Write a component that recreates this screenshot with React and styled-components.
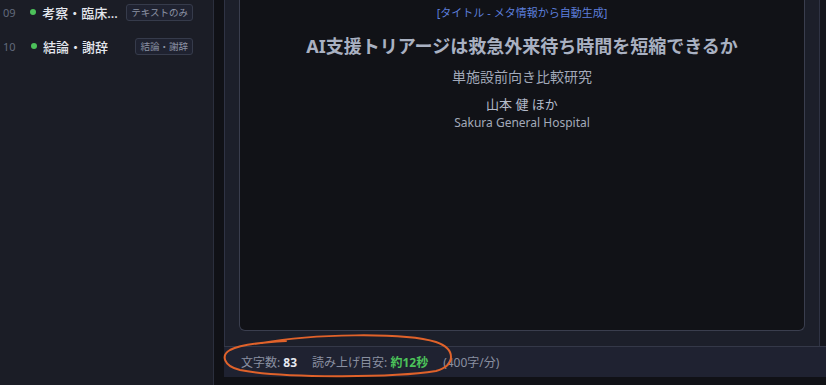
import React from 'react'
import styled, { createGlobalStyle } from 'styled-components'

const GlobalStyle = createGlobalStyle`
  html, body {
    margin: 0;
    padding: 0;
    background: #101116;
    overflow: hidden;
  }
  body {
    font-family: "Noto Sans", "Noto Sans CJK JP", sans-serif;
  }
`

const items = [
  { no: '09', title: '考察・臨床的意義', badge: 'テキストのみ' },
  { no: '10', title: '結論・謝辞', badge: '結論・謝辞' },
]

const App = () => {
  return (
    <>
      <GlobalStyle />
      <Page>
        <Sidebar>
          <List>
            {items.map((it) => (
              <Row key={it.no}>
                <No>{it.no}</No>
                <Dot />
                <Title>{it.title}</Title>
                <Badge>{it.badge}</Badge>
              </Row>
            ))}
          </List>
        </Sidebar>

        <Main>
          <Body>
            <Panel>
              <Preview>
                <AutoLabel>[タイトル - メタ情報から自動生成]</AutoLabel>
                <SlideTitle>AI支援トリアージは救急外来待ち時間を短縮できるか</SlideTitle>
                <Subtitle>単施設前向き比較研究</Subtitle>
                <Author>山本 健 ほか</Author>
                <Affiliation>Sakura General Hospital</Affiliation>
              </Preview>
            </Panel>
            <Gutter />
          </Body>
          <Footer>
            <Stat>
              文字数: <Strong>83</Strong>
            </Stat>
            <Stat>
              読み上げ目安: <Green>約12秒</Green>
            </Stat>
            <Stat>(400字/分)</Stat>
            {/* hand drawn annotation circling the counters */}
            <Mark viewBox="0 0 232 46" width="232" height="46">
              <path
                d="M 40 10 C 90 1, 180 -1, 214 9 C 234 16, 234 32, 214 38 C 170 45, 60 45, 18 37 C 1 33, -1 22, 8 17 C 20 11, 45 9, 64 8"
                fill="none"
                stroke="#e0622a"
                strokeWidth="2"
                strokeLinecap="round"
              />
            </Mark>
          </Footer>
        </Main>
      </Page>
    </>
  )
}

export default App

const Page = styled.div`
  display: flex;
  width: 826px;
  height: 385px;
  background: #101116;
  overflow: hidden;
`

const Sidebar = styled.div`
  width: 213px;
  flex-shrink: 0;
  background: #1b1d26;
  border-right: 1px solid #2b2f3d;
`

const List = styled.div`
  margin-top: -5px;
  display: flex;
  flex-direction: column;
`

const Row = styled.div`
  display: flex;
  align-items: center;
  height: 34px;
  padding: 0 20px 0 3px;
`

const No = styled.span`
  width: 28px;
  font-size: 11px;
  color: #626a7c;
`

const Dot = styled.span`
  width: 6px;
  height: 6px;
  border-radius: 50%;
  background: #4cc15a;
  margin-right: 6px;
  flex-shrink: 0;
`

const Title = styled.span`
  max-width: 76px;
  margin-right: 8px;
  white-space: nowrap;
  overflow: hidden;
  text-overflow: ellipsis;
  font-size: 13px;
  font-weight: 500;
  color: #e4e7ee;
`

const Badge = styled.span`
  margin-left: auto;
  height: 17px;
  box-sizing: border-box;
  display: flex;
  align-items: center;
  padding: 0 4px;
  border: 1px solid #363b4b;
  border-radius: 3px;
  background: #1f2230;
  font-size: 9.5px;
  color: #8c92a4;
  white-space: nowrap;
`

const Main = styled.div`
  flex: 1;
  margin-left: 10px;
  display: flex;
  flex-direction: column;
`

const Body = styled.div`
  flex: 1;
  display: flex;
`

const Panel = styled.div`
  flex: 1;
  background: #1c1f2a;
  border-left: 1px solid #2f3344;
  border-right: 1px solid #2f3344;
  padding: 0 14px 15px;
  display: flex;
`

const Gutter = styled.div`
  width: 6px;
  background: #15161d;
`

const Preview = styled.div`
  flex: 1;
  background: #111217;
  border: 1px solid #3a3e4e;
  border-top: none;
  border-radius: 0 0 6px 6px;
  display: flex;
  flex-direction: column;
  align-items: center;
  padding-top: 5px;
`

const AutoLabel = styled.div`
  font-size: 11px;
  line-height: 16px;
  color: #5d7fdc;
`

const SlideTitle = styled.div`
  margin-top: 12px;
  font-size: 18px;
  line-height: 26px;
  font-weight: 700;
  color: #a9b1c2;
`

const Subtitle = styled.div`
  margin-top: 8px;
  font-size: 14px;
  line-height: 20px;
  color: #a2a9b9;
`

const Author = styled.div`
  margin-top: 8px;
  font-size: 13px;
  line-height: 18px;
  color: #b3bac9;
`

const Affiliation = styled.div`
  margin-top: 2px;
  font-size: 12px;
  line-height: 16px;
  color: #a3aaba;
`

const Footer = styled.div`
  position: relative;
  height: 30px;
  margin-bottom: 8px;
  border-top: 1px solid #343848;
  background: #1f2231;
  display: flex;
  align-items: center;
  gap: 15px;
  padding-left: 17px;
  font-size: 12px;
  color: #8a90a1;
`

const Stat = styled.span`
  white-space: nowrap;
`

const Strong = styled.b`
  color: #e6e9f0;
`

const Green = styled.b`
  color: #4cc35a;
`

const Mark = styled.svg`
  position: absolute;
  left: -2px;
  top: -14px;
  overflow: visible;
  pointer-events: none;
`
